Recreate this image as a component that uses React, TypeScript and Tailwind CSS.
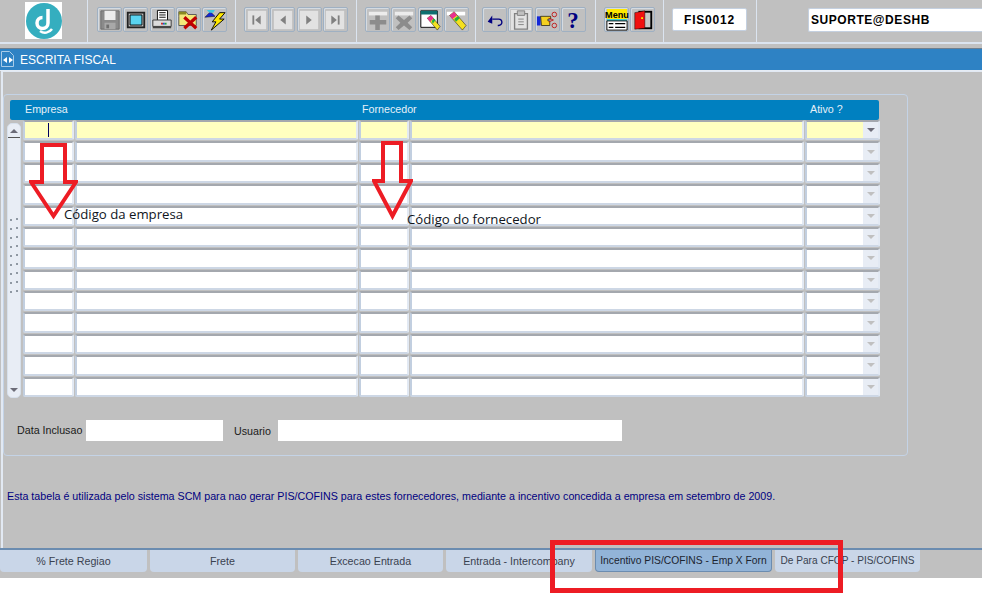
import type { ReactNode } from "react";

// toolbar icons, drawn on a 24x24 grid
const icons: Record<string, ReactNode> = {
  save: (
    <>
      <path d="M2 2h20v20H2z" fill="#8a8a8a" stroke="#6a6a6a" />
      <path d="M6 2h12v10H6z" fill="#ececec" />
      <path d="M6 15h12v7H6z" fill="#a8a8a8" />
      <path d="M8 17h3v4H8z" fill="#6e6e6e" />
    </>
  ),
  screen: (
    <>
      <path d="M2 3h20v18H2z" fill="#222" />
      <path d="M4 5h16v14H4z" fill="#c0c0c0" />
      <path d="M5.500 6.500h13v11h-13z" fill="#5ad4f0" stroke="#000" />
    </>
  ),
  printer: (
    <>
      <path d="M7 1.500h11v11H7z" fill="#fff" stroke="#000" />
      <path d="M9 4h7M9 6.500h7M9 9h7" stroke="#000" />
      <path d="M2 12h20v7H2z" fill="#dcdcdc" stroke="#333" />
      <path d="M11 15h2v2h-2z" fill="#d02020" />
      <path d="M13 15h2v2h-2z" fill="#2050d0" />
      <path d="M15 15h2v2h-2z" fill="#20a040" />
      <path d="M2 19h20v2H2z" fill="#444" />
    </>
  ),
  folderX: (
    <>
      <path d="M2 8V3h8l2 3h9v12H2z" fill="#f4e97a" stroke="#555" />
      <path d="M2 3h8v3H2z" fill="#8a8a20" />
      <path d="M8 9l13 12M21 9L8 21" stroke="#c00000" strokeWidth="3.500" />
    </>
  ),
  bolt: (
    <>
      <path d="M1 9l6-6 5 5z" fill="#1428d8" stroke="#000" strokeWidth="0.500" />
      <path d="M3 1h9l-2 3H6z" fill="#40c8e0" />
      <path d="M17 4h6l-6 7h5L8 23l5-9H9z" fill="#ffe800" stroke="#000" />
    </>
  ),
  first: (
    <>
      <path d="M2 2h20v20H2z" fill="#e2e2e2" />
      <path d="M7 7h2v10H7z" fill="#808080" />
      <path d="M16 7v10l-6-5z" fill="#808080" />
    </>
  ),
  prev: (
    <>
      <path d="M2 2h20v20H2z" fill="#e2e2e2" />
      <path d="M15 7v10l-6-5z" fill="#808080" />
    </>
  ),
  next: (
    <>
      <path d="M2 2h20v20H2z" fill="#e2e2e2" />
      <path d="M9 7v10l6-5z" fill="#808080" />
    </>
  ),
  last: (
    <>
      <path d="M2 2h20v20H2z" fill="#e2e2e2" />
      <path d="M8 7v10l6-5z" fill="#808080" />
      <path d="M15 7h2v10h-2z" fill="#808080" />
    </>
  ),
  plus: (
    <>
      <path d="M2 3h20v4H2z" fill="#ececec" />
      <path d="M9 7h5v5h7v5h-7v6H9v-6H3v-5h6z" fill="#8c8c8c" />
    </>
  ),
  cross: (
    <>
      <path d="M2 3h20v4H2z" fill="#ececec" />
      <path d="M6 7l6 5 6-5 3 3-5 5 5 5-3 3-6-5-6 5-3-3 5-5-5-5z" fill="#8c8c8c" />
    </>
  ),
  windowEdit: (
    <>
      <path d="M2 2h18v18H2z" fill="#fff" stroke="#000" />
      <path d="M2 2h18v4H2z" fill="#0f6f70" />
      <path d="M9 10l4-3 10 12-3 4z" fill="#f4e020" stroke="#000" strokeWidth="0.500" />
      <path d="M9 10l4-3 3 3-4 4z" fill="#e83090" />
      <path d="M14 13l2-3 2 2-3 4z" fill="#20b040" />
    </>
  ),
  edit: (
    <>
      <path d="M2 3h20v4H2z" fill="#fff" />
      <path d="M5 7l5-4 13 15-4 5z" fill="#f4e020" stroke="#000" strokeWidth="0.500" />
      <path d="M5 7l5-4 3 4-5 4z" fill="#e83090" />
      <path d="M10 11l4-3 2 2-4 4z" fill="#20b040" />
    </>
  ),
  undo: (
    <>
      <path d="M9 11h7a3.500 3.500 0 0 1 0 7h-1" fill="none" stroke="#000080" strokeWidth="1.500" />
      <path d="M9 7v9l-5-2z" fill="#000080" />
    </>
  ),
  clipboard: (
    <>
      <path d="M1 1h22v22H1z" fill="#e2e2e2" />
      <path d="M5 5h14v17H5z" fill="none" stroke="#808080" strokeWidth="1.500" />
      <path d="M8 2h8v5H8z" fill="#c0c0c0" stroke="#808080" />
      <path d="M9 11h6M9 14h6M9 17h6" stroke="#808080" />
    </>
  ),
  hand: (
    <>
      <path d="M1 8h4v10H1z" fill="#1428d8" />
      <path d="M5 8h11v3h-3v2h2v5H6z" fill="#f4d020" stroke="#000" strokeWidth="0.700" />
      <circle cx="20" cy="6" r="2.500" fill="none" stroke="#c01818" />
      <circle cx="20" cy="18" r="2.500" fill="none" stroke="#c01818" />
      <path d="M14 10l5 2M14 14l5-2" stroke="#c01818" />
    </>
  ),
  help: (
    <text x="12" y="21" textAnchor="middle" fontSize="25" fontWeight="700" fontFamily="'Liberation Serif', serif" fill="#000080">
      ?
    </text>
  ),
  menu: (
    <>
      <path d="M1 0h22v11H1z" fill="#ffe800" />
      <text x="12" y="9.500" textAnchor="middle" fontSize="10" fontWeight="700" fontFamily="'Liberation Sans', sans-serif" fill="#000">
        Menu
      </text>
      <path d="M1 11h22v2H1z" fill="#30d0e0" />
      <path d="M1 13h22v10H1z" fill="#fff" stroke="#000" />
      <path d="M3 16h5M10 16h11M3 20h5M10 20h11" stroke="#000" strokeWidth="1.500" />
    </>
  ),
  door: (
    <>
      <path d="M7 2h15v20H7z" fill="#000" />
      <path d="M9 4h11v16H9z" fill="#c8c8c8" />
      <path d="M3 4l11-2v19l-11 1z" fill="#f01010" stroke="#000" strokeWidth="0.500" />
      <path d="M10 9h2v2h-2z" fill="#ffe800" />
    </>
  ),
};

function ToolButton({ icon }: { icon: string }) {
  return (
    <div className="w-[25px] h-[25px] flex items-center justify-center rounded-[2px] border border-[#9fb0c2] shadow-[inset_1px_1px_0_#d4dbe2]">
      <svg width="22" height="22" viewBox="0 0 24 24" className="overflow-visible">
        {icons[icon]}
      </svg>
    </div>
  );
}

function ToolGroup({ children, className }: { children: ReactNode; className: string }) {
  return <div className={`h-full flex items-center gap-[1.3px] pb-[3px] border-r border-[#dbe4f0] ${className}`}>{children}</div>;
}

function Cell({ width, active, children }: { width: string; active?: boolean; children?: ReactNode }) {
  return (
    <div
      className={`${width} h-full rounded-[2px] border-2 border-t-[#a4a8ae] border-l-[#c2cfe0] border-r-[#e2e9f3] border-b-[#cdd7e5] ${
        active ? "bg-[#ffffc0]" : "bg-white"
      } relative`}
    >
      {children}
    </div>
  );
}

function Row({ active }: { active?: boolean }) {
  return (
    <div className="flex gap-px h-full pb-px">
      <Cell width="w-[51px]" active={active}>
        {active && <div className="absolute left-[23px] top-[1px] w-px h-[14px] bg-[#000060]" />}
      </Cell>
      <Cell width="w-[283px]" active={active} />
      <Cell width="w-[50px]" active={active} />
      <Cell width="w-[394px]" active={active} />
      <Cell width="w-[75px]" active={active}>
        <div className="absolute right-0 top-0 bottom-0 w-[15px] bg-[#e8edf5] flex items-center justify-center">
          <div
            className={`w-0 h-0 border-x-[4px] border-x-transparent border-t-[4px] ${
              active ? "border-t-[#6c6c78]" : "border-t-[#c0c0c0]"
            }`}
          />
        </div>
      </Cell>
    </div>
  );
}

function Tab({ label, width, size = "text-[10.7px]", active }: { label: string; width: string; size?: string; active?: boolean }) {
  return (
    <div
      className={`${width} ${size} h-[22px] flex items-center justify-center whitespace-nowrap rounded-b-[4px] ${
        active ? "bg-[#92b4d8] border border-t-0 border-[#6b8cb0] text-[#1c2430]" : "bg-[#c9d6e8] text-[#3a4250]"
      }`}
    >
      {label}
    </div>
  );
}

function DownArrow({ className, width, height, d }: { className: string; width: number; height: number; d: string }) {
  return (
    <svg className={`absolute ${className}`} width={width} height={height} viewBox={`0 0 ${width} ${height}`}>
      <path d={d} fill="none" stroke="#ed1c24" strokeWidth="4" strokeLinejoin="miter" />
    </svg>
  );
}

export default function App() {
  const rows = Array.from({ length: 13 }, (_, i) => i);

  return (
    <div className="relative w-[995px] h-[603px] bg-white overflow-hidden font-['Liberation_Sans',Arial,sans-serif]">
      <div className="w-[982px] h-[578px] bg-[#c0c0c0] flex flex-col">
        {/* Toolbar */}
        <div className="h-[44px] flex items-start shrink-0 border-b-2 border-[#dbe4f0]">
          <div className="w-[88px] h-full flex items-start pt-[2px] pl-[25px] border-r border-[#dbe4f0]">
            <div className="w-[37px] h-[37px] bg-white flex items-center justify-center">
              <svg width="36" height="36" viewBox="0 0 36 36">
                <circle cx="18" cy="18" r="18" fill="#35aebf" />
                <path d="M22 6v14a5.500 5.500 0 1 1-5.500-5.500" fill="none" stroke="#fff" strokeWidth="3.500" />
                <path d="M14 28c4 3 9 2 12-2" fill="none" stroke="#fff" strokeWidth="2.500" />
              </svg>
            </div>
          </div>
          <ToolGroup className="w-[148px] pl-[9px]">
            <ToolButton icon="save" />
            <ToolButton icon="screen" />
            <ToolButton icon="printer" />
            <ToolButton icon="folderX" />
            <ToolButton icon="bolt" />
          </ToolGroup>
          <ToolGroup className="w-[121px] pl-[8px]">
            <ToolButton icon="first" />
            <ToolButton icon="prev" />
            <ToolButton icon="next" />
            <ToolButton icon="last" />
          </ToolGroup>
          <ToolGroup className="w-[119px] pl-[8px]">
            <ToolButton icon="plus" />
            <ToolButton icon="cross" />
            <ToolButton icon="windowEdit" />
            <ToolButton icon="edit" />
          </ToolGroup>
          <ToolGroup className="w-[120px] pl-[6px]">
            <ToolButton icon="undo" />
            <ToolButton icon="clipboard" />
            <ToolButton icon="hand" />
            <ToolButton icon="help" />
          </ToolGroup>
          <ToolGroup className="w-[68px] pl-[8px]">
            <ToolButton icon="menu" />
            <ToolButton icon="door" />
          </ToolGroup>
          <div className="w-[93px] h-full flex items-center pl-[8px] pb-[3px] border-r border-[#dbe4f0]">
            <div className="w-[75px] h-[23px] bg-white rounded-[2px] border border-[#c4d0e0] flex items-center justify-center text-[12px] font-bold tracking-[0.8px] text-black">
              FIS0012
            </div>
          </div>
          <div className="flex-1 h-full flex items-center pl-[51px] pb-[3px]">
            <div className="flex-1 h-[24px] bg-white rounded-l-[2px] border border-r-0 border-[#c4d0e0] flex items-center pl-[2px] text-[12px] font-bold tracking-[0.55px] text-black">
              SUPORTE@DESHB
            </div>
          </div>
        </div>

        {/* Window title bar */}
        <div className="h-[22px] mt-[4px] shrink-0 bg-[#2e82c4] border-t border-[#6e7f90] flex items-center text-white text-[12px] shadow-[0_1px_0_#e6ecf4]">
          <svg width="14" height="17" viewBox="0 0 14 17" className="ml-[1px] mr-[5px] -mt-[2px]">
            <path d="M.5 1.500h8l4 4v11H.5z" fill="#2e82c4" stroke="#a8cbe8" />
            <path d="M6 7v6L2 10zM8 7v6l4-3z" fill="#fff" />
          </svg>
          ESCRITA FISCAL
        </div>

        {/* Form canvas */}
        <div className="flex-1 min-h-0 mt-[1px] ml-[1px] border-l-2 border-t border-[#e2e9f3] pt-[22px] flex flex-col">
          <div className="w-[905px] h-[362px] shrink-0 border border-[#c4d3e6] rounded-[4px] pt-[5px] pl-[6px]">
            {/* Column headings */}
            <div className="w-[869px] h-[20px] pb-[2px] bg-[#0080c0] rounded-[2px] flex items-center text-[10.7px] text-[#e6f0f8]">
              <span className="w-[352px] pl-[15px]">Empresa</span>
              <span className="w-[448px]">Fornecedor</span>
              <span>Ativo ?</span>
            </div>
            <div className="flex h-[278px] -ml-[3px]">
              {/* Record scrollbar */}
              <div className="w-[14px] mr-[3px] mt-[3px] bg-[#e8edf5] rounded-[5px] border border-[#d6e0ec] flex flex-col items-center justify-between">
                <div className="w-full h-[14px] border-b border-[#555] flex items-center justify-center">
                  <div className="w-0 h-0 border-x-[4px] border-x-transparent border-b-[4px] border-b-[#6c6c78]" />
                </div>
                <div className="flex flex-col gap-[6px] -mt-[10px]">
                  {[0, 1, 2, 3, 4, 5, 6, 7, 8].map((n) => (
                    <div key={n} className="flex gap-[4px] items-start">
                      <div className="w-[2px] h-[2px] mt-[1px] bg-[#8f98a3]" />
                      <div className="w-[2px] h-[2px] bg-[#8f98a3]" />
                    </div>
                  ))}
                </div>
                <div className="w-full h-[14px] flex items-center justify-center">
                  <div className="w-0 h-0 border-x-[4px] border-x-transparent border-t-[4px] border-t-[#6c6c78]" />
                </div>
              </div>
              <div className="grid grid-rows-[repeat(13,1fr)] h-full -ml-px">
                {rows.map((i) => (
                  <Row key={i} active={i === 0} />
                ))}
              </div>
            </div>

            {/* Record details */}
            <div className="flex items-center h-[21px] mt-[22px] pl-[7px] text-[10.7px] text-[#1a1a1a]">
              <span className="w-[69px]">Data Inclusao</span>
              <div className="w-[137px] h-full bg-white" />
              <span className="ml-[11px] w-[44px] pt-[2px]">Usuario</span>
              <div className="w-[344px] h-full bg-white" />
            </div>
          </div>

          <p className="mt-[33px] pl-[4px] text-[10.7px] leading-[14px] text-[#000080] whitespace-nowrap">
            Esta tabela é utilizada pelo sistema SCM para nao gerar PIS/COFINS para estes fornecedores, mediante a incentivo concedida a empresa em setembro de 2009.
          </p>
        </div>

        {/* Tabs */}
        <div className="h-[30px] shrink-0 border-t-2 border-t-[#6b8cb0] flex gap-[3px]">
          <Tab label="% Frete Regiao" width="w-[147px]" />
          <Tab label="Frete" width="w-[145px]" />
          <Tab label="Excecao Entrada" width="w-[145px]" />
          <Tab label="Entrada - Intercompany" width="w-[146px]" />
          <Tab label="Incentivo PIS/COFINS - Emp X Forn" width="w-[177px]" size="text-[10.3px]" active />
          <Tab label="De Para CFOP - PIS/COFINS" width="w-[145px]" size="text-[10.1px]" />
        </div>
      </div>

      {/* Annotations pasted over the screenshot */}
      <DownArrow className="left-[29px] top-[142px]" width={49} height={78} d="M13 3h23v37h11L24.500 74 2 40h11z" />
      <DownArrow className="left-[372px] top-[141px]" width={41} height={79} d="M11 2h18v38h10L20.500 75 2 40h9z" />
      <span className="absolute left-[64px] top-[205px] text-[13.2px] leading-[18px] text-[#10151c] font-['Open_Sans',sans-serif]">
        Código da empresa
      </span>
      <span className="absolute left-[407px] top-[210px] text-[13.2px] leading-[18px] text-[#10151c] font-['Open_Sans',sans-serif]">
        Código do fornecedor
      </span>
      <div className="absolute left-[550px] top-[540px] w-[293px] h-[53px] border-[5px] border-[#ed1c24]" />
    </div>
  );
}
